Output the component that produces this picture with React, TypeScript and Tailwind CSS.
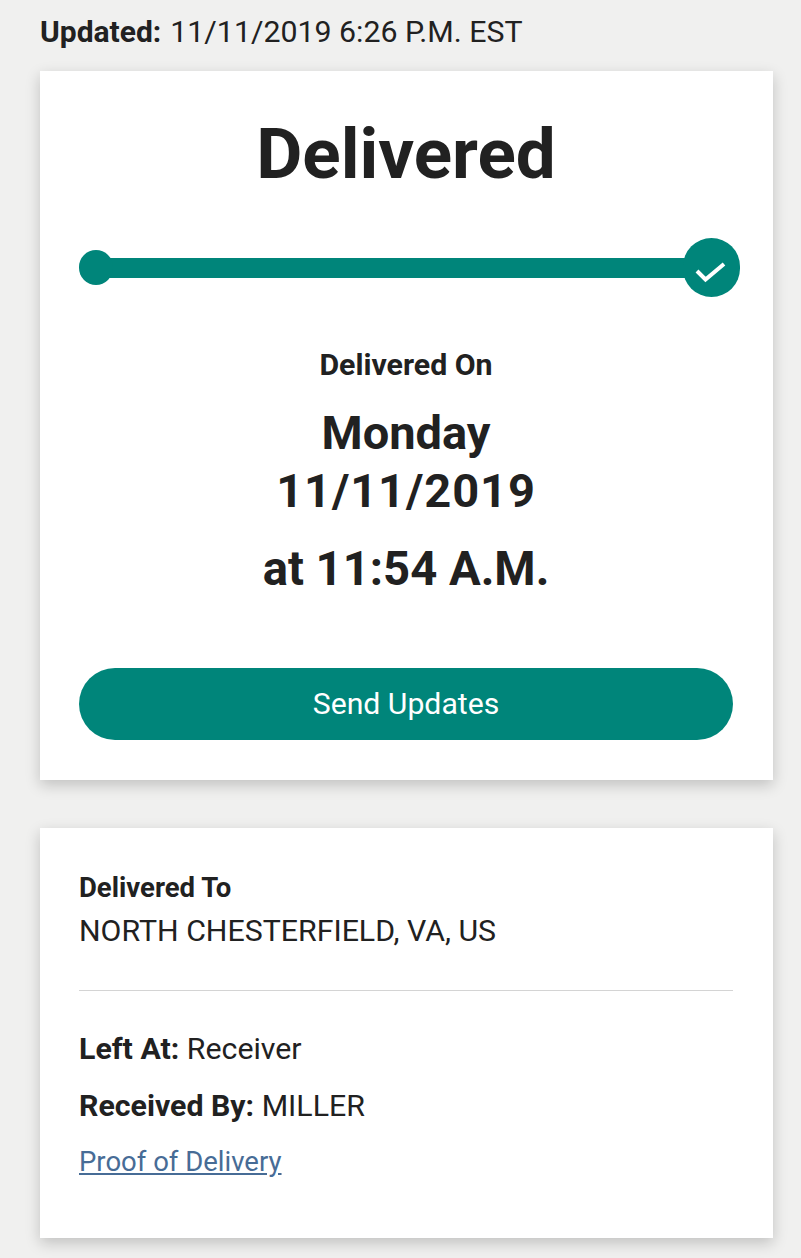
import React from 'react';

const Card: React.FC<{ className?: string; children: React.ReactNode }> = ({ className, children }) => (
  <div className={`mr-7 ml-10 bg-white shadow-[0_5px_14px_rgba(0,0,0,0.2)] ${className ?? ''}`}>{children}</div>
);

const App: React.FC = () => {
  return (
    <div className="h-[1258px] overflow-hidden bg-[#f0f0ef] font-['Roboto',sans-serif] text-[#212121]">
      <div className="ml-10 flex h-[71px] items-start pt-[14px] text-[30px] leading-[36px]">
        <span className="font-bold">Updated:</span>
        <span className="ml-[9px] text-[30.3px]">11/11/2019 6:26 P.M. EST</span>
      </div>

      <Card className="h-[709px] pr-[40px] pl-[39px]">
        <h1 className="pt-[42px] text-center text-[71px] leading-[82px] font-bold">Delivered</h1>

        <div className="relative mt-[43px] -mr-[7px] flex h-[60px] items-center">
          <div className="mx-4 h-5 w-full bg-[#00857a]" />
          <div className="absolute top-[12px] left-0 h-[35px] w-[34px] rounded-full bg-[#00857a]" />
          <div className="absolute top-0 right-0 flex h-[59px] w-[57px] items-center justify-center rounded-full bg-[#00857a]">
            <svg className="mt-[9px] -ml-[3px]" width="32" height="24" viewBox="0 0 32 24" fill="none">
              <path d="M3 11l8.5 8.5L30 4" stroke="#fff" strokeWidth="4" />
            </svg>
          </div>
        </div>

        <p className="mt-[49px] text-center text-[30.3px] leading-[36px] font-bold">Delivered On</p>
        <p className="mt-[21px] text-center text-[47px] leading-[58px] font-bold">
          Monday
          <br />
          <span className="tracking-[0.9px]">11/11/2019</span>
        </p>
        <p className="mt-[20px] text-center text-[47.2px] leading-[58px] font-bold">at 11:54 A.M.</p>

        <button className="mt-[70px] flex h-[72px] w-full items-center justify-center rounded-full bg-[#00857a] pb-px text-[30.2px] text-white">
          Send Updates
        </button>
      </Card>

      <Card className="mt-[48px] h-[410px] pr-[40px] pl-[39px] pt-[42px]">
        <p className="text-[27.5px] leading-[36px] font-bold">Delivered To</p>
        <p className="mt-[5px] text-[30.3px] leading-[40px]">NORTH CHESTERFIELD, VA, US</p>
        <div className="mt-[39px] h-px bg-[#d4d4d4]" />
        <p className="mt-[38px] text-[30.3px] leading-[40px]">
          <span className="font-bold">Left At:</span> Receiver
        </p>
        <p className="mt-[17px] text-[30.3px] leading-[40px]">
          <span className="font-bold">Received By:</span> MILLER
        </p>
        <a className="mt-[16px] block text-[27.5px] leading-[40px] text-[#476c96] underline">Proof of Delivery</a>
      </Card>
    </div>
  );
};

export default App;
